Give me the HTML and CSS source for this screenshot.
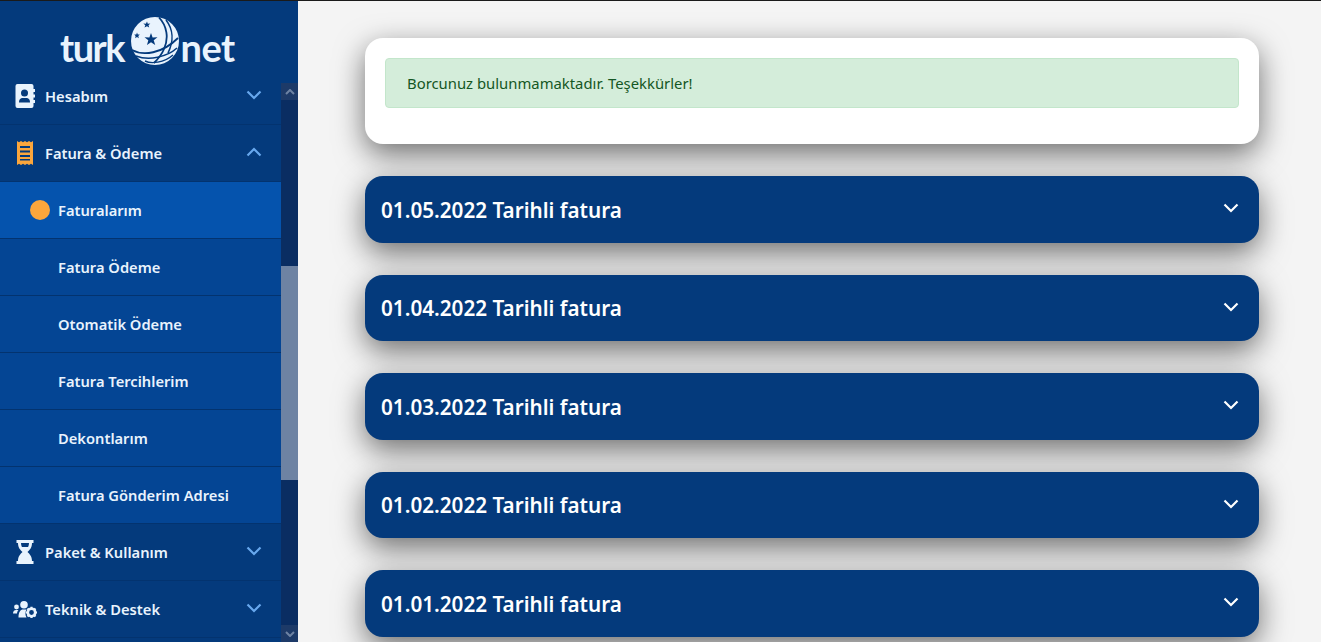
FILE: index.html
```html
<!DOCTYPE html>
<html lang="tr">
<head>
    <meta charset="UTF-8">
    <meta name="viewport" content="width=device-width, initial-scale=1.0">
    <title>Faturalarım</title>
    <link rel="stylesheet" href="styles.css">
</head>
<body>
    <div class="layout">
        <aside class="sidebar">
            <div class="logo">
                <span class="logo-text logo-turk">turk</span>
                <svg class="globe" viewBox="0 0 48 48" width="48" height="48">
                    <circle cx="24" cy="24" r="24" fill="#e9f3fd"/>
                    <polygon fill="#043a7c" points="20,16 21.6,20.6 26.5,20.3 22.7,23.3 24.2,28 20,25.3 16,28 17.3,23.3 13.5,20.3 18.4,20.6"/>
                    <polygon fill="#043a7c" points="16,4.500 16.800,6.800 19.300,6.400 17.500,8.200 18.200,10.500 16,9.200 13.500,10.500 14.300,8.200 12.300,6.500 14.900,6.800"/>
                    <polygon fill="#043a7c" points="6,15.500 6.800,17.500 8.800,17.500 7.300,19 7.800,21.200 6,20 4.200,21.200 4.600,19 3.200,17.500 5.300,17.500"/>
                    <path d="M28 0.500C36 9 38 21 33 32C31 37 27 42 23 46" fill="none" stroke="#043a7c" stroke-width="1.800"/>
                    <path d="M35 3C42 12 43 24 37 36" fill="none" stroke="#043a7c" stroke-width="1.600"/>
                    <path d="M1 33C12 39 31 37 47 21" fill="none" stroke="#043a7c" stroke-width="1.800"/>
                    <path d="M5 39C18 44 36 40 46 31" fill="none" stroke="#043a7c" stroke-width="1.600"/>
                    <path d="M14 44C20 47 33 46 42 38" fill="none" stroke="#043a7c" stroke-width="1.400"/>
                </svg>
                <span class="logo-text">net</span>
            </div>

            <nav class="menu">
                <a class="menu-item">
                    <svg class="menu-icon" viewBox="0 0 20 24" width="20" height="24">
                        <path fill="#e9f3fd" d="M2.500 0H16.500A2 2 0 0 1 18.500 2V5H20V8H18.500V10.500H20V13.500H18.500V16H20V19H18.500V22A2 2 0 0 1 16.500 24H2.500A2 2 0 0 1 0.500 22V2A2 2 0 0 1 2.500 0Z"/>
                        <circle cx="9.500" cy="9" r="3.500" fill="#043a7c"/>
                        <path fill="#043a7c" d="M4 18.500C4 15 6 14 7.500 14H11.500C13 14 15 15 15 18.500Z"/>
                    </svg>
                    <span class="menu-label">Hesabım</span>
                    <svg class="chev" viewBox="0 0 16 10" width="16" height="10"><path d="M1.500 1.500L8 8L14.500 1.500"/></svg>
                </a>
                <a class="menu-item open">
                    <svg class="menu-icon" viewBox="0 0 20 24" width="20" height="24">
                        <path fill="#fba63c" d="M2 0L4 1.200L6 0L8 1.200L10 0L12 1.200L14 0L16 1.200L18 0V24L16 22.800L14 24L12 22.800L10 24L8 22.800L6 24L4 22.800L2 24Z"/>
                        <path fill="#043a7c" d="M5 5H15V7H5ZM5 9.500H15V11.500H5ZM5 14H15V16H5ZM5 18H15V19.500H5Z"/>
                    </svg>
                    <span class="menu-label">Fatura &amp; Ödeme</span>
                    <svg class="chev" viewBox="0 0 16 10" width="16" height="10"><path d="M1.500 8.500L8 2L14.500 8.500"/></svg>
                </a>
                <a class="sub-item active"><span class="dot"></span>Faturalarım</a>
                <a class="sub-item">Fatura Ödeme</a>
                <a class="sub-item">Otomatik Ödeme</a>
                <a class="sub-item">Fatura Tercihlerim</a>
                <a class="sub-item">Dekontlarım</a>
                <a class="sub-item">Fatura Gönderim Adresi</a>
                <a class="menu-item">
                    <svg class="menu-icon" viewBox="0 0 20 24" width="20" height="24">
                        <path fill="#e9f3fd" d="M1.500 0H18.500V3H17C17 8 14.500 10 12.500 12C14.500 14 17 16 17 21H18.500V24H1.500V21H3C3 16 5.500 14 7.500 12C5.500 10 3 8 3 3H1.500ZM6 3C6 4.500 6.300 5.800 6.900 7H13.100C13.700 5.800 14 4.500 14 3Z"/>
                    </svg>
                    <span class="menu-label">Paket &amp; Kullanım</span>
                    <svg class="chev" viewBox="0 0 16 10" width="16" height="10"><path d="M1.500 1.500L8 8L14.500 1.500"/></svg>
                </a>
                <a class="menu-item">
                    <svg class="menu-icon" viewBox="0 0 24 17" width="24" height="17">
                        <circle cx="3.500" cy="6" r="2.400" fill="#e9f3fd"/>
                        <circle cx="11" cy="3.800" r="3.800" fill="#e9f3fd"/>
                        <path fill="#e9f3fd" d="M0 12.500C0 10 1.500 9 3 9H5.500C4.500 10 4 11.500 4 12.500ZM5.500 16.500C5.500 11 7.500 8.500 10 8.500H13.500C12 11 12 14 13.500 16.500Z"/>
                        <circle cx="18.500" cy="11.500" r="3.700" fill="none" stroke="#e9f3fd" stroke-width="2.600"/>
                        <path stroke="#e9f3fd" stroke-width="2.200" d="M18.500 5.800V8M18.500 15V17M12.800 11.500H15M22 11.500H24M14.500 7.500L16 9M21 14L22.500 15.500M14.500 15.500L16 14M21 9L22.500 7.500"/>
                    </svg>
                    <span class="menu-label">Teknik &amp; Destek</span>
                    <svg class="chev" viewBox="0 0 16 10" width="16" height="10"><path d="M1.500 1.500L8 8L14.500 1.500"/></svg>
                </a>
            </nav>

            <!-- kaydirma cubugu -->
            <div class="scrollbar">
                <div class="scroll-btn"><svg viewBox="0 0 10 6" width="10" height="6"><path d="M1 5L5 1L9 5"/></svg></div>
                <div class="scroll-track">
                    <div class="scroll-thumb"></div>
                </div>
                <div class="scroll-btn"><svg viewBox="0 0 10 6" width="10" height="6"><path d="M1 1L5 5L9 1"/></svg></div>
            </div>
        </aside>

        <main class="content">
            <div class="notice-card">
                <div class="alert">Borcunuz bulunmamaktadır. Teşekkürler!</div>
            </div>

            <div class="invoice">
                <span>01.05.2022 Tarihli fatura</span>
                <svg class="invoice-chev" viewBox="0 0 16 10" width="16" height="10"><path d="M1.500 1.500L8 8L14.500 1.500"/></svg>
            </div>
            <div class="invoice">
                <span>01.04.2022 Tarihli fatura</span>
                <svg class="invoice-chev" viewBox="0 0 16 10" width="16" height="10"><path d="M1.500 1.500L8 8L14.500 1.500"/></svg>
            </div>
            <div class="invoice">
                <span>01.03.2022 Tarihli fatura</span>
                <svg class="invoice-chev" viewBox="0 0 16 10" width="16" height="10"><path d="M1.500 1.500L8 8L14.500 1.500"/></svg>
            </div>
            <div class="invoice">
                <span>01.02.2022 Tarihli fatura</span>
                <svg class="invoice-chev" viewBox="0 0 16 10" width="16" height="10"><path d="M1.500 1.500L8 8L14.500 1.500"/></svg>
            </div>
            <div class="invoice">
                <span>01.01.2022 Tarihli fatura</span>
                <svg class="invoice-chev" viewBox="0 0 16 10" width="16" height="10"><path d="M1.500 1.500L8 8L14.500 1.500"/></svg>
            </div>
        </main>
    </div>
</body>
</html>
```

FILE: styles.css
```css
html, body {
    margin: 0;
    height: 100%;
    overflow: hidden;
}

body {
    font-family: "Noto Sans", "Open Sans", sans-serif;
    background: #f4f4f4;
    border-top: 1px solid #1a1a1a;
    box-sizing: border-box;
}

.layout {
    display: flex;
    height: 100%;
}

/* menu */
.sidebar {
    position: relative;
    flex: 0 0 298px;
    background: #043a7c;
    overflow: hidden;
}

.logo {
    display: flex;
    align-items: flex-end;
    height: 64px;
    padding-left: 60px;
    margin-bottom: 3px;
}

.logo-text {
    font-family: "Lato", sans-serif;
    font-size: 38px;
    font-weight: 700;
    letter-spacing: -0.500px;
    line-height: 47px;
    margin-bottom: -6px;
    color: #e9f3fd;
}

.logo-turk {
    letter-spacing: -1.500px;
}

.globe {
    margin: 0 1.500px 0 7px;
}

.menu {
    width: 281px;
}

.menu-item, .sub-item {
    display: flex;
    align-items: center;
    box-sizing: border-box;
    height: 57px;
    border-bottom: 1px solid #03336f;
    color: #e9f3fd;
    font-size: 14.700px;
    font-weight: 600;
}

.menu-item {
    padding: 0 19px 0 13px;
}

.menu-icon {
    flex: 0 0 24px;
    margin-right: 8px;
}

.menu-label {
    flex: 1;
}

.chev {
    margin-top: -3px;
}

.chev path, .invoice-chev path {
    fill: none;
    stroke-width: 2.200;
}

.chev path {
    stroke: #68a8ee;
}

.sub-item {
    padding-left: 58px;
    background: #044594;
}

.sub-item.active {
    position: relative;
    background: #0553ad;
}

.dot {
    position: absolute;
    left: 30px;
    width: 20px;
    height: 20px;
    border-radius: 50%;
    background: #fba63c;
}

.scrollbar {
    position: absolute;
    top: 82px;
    right: 0;
    bottom: 0;
    width: 17px;
    display: flex;
    flex-direction: column;
    background: #0a2d62;
}

.scroll-btn {
    display: flex;
    align-items: center;
    justify-content: center;
    height: 17px;
    background: #1d3a68;
}

.scroll-btn path {
    fill: none;
    stroke: #6e83a3;
    stroke-width: 2;
}

.scroll-track {
    flex: 1;
    padding-top: 166px;
}

.scroll-thumb {
    height: 214px;
    background: #6e83a3;
}

/* icerik */
.content {
    flex: 1;
    padding: 37px 62px 0 67px;
    min-width: 0;
}

.notice-card {
    box-sizing: border-box;
    height: 106px;
    padding: 20px;
    margin-bottom: 32px;
    background: #fff;
    border-radius: 18px;
    box-shadow: 0 10px 30px rgba(0, 0, 0, 0.55);
}

.alert {
    box-sizing: border-box;
    height: 50px;
    padding: 0 21px;
    display: flex;
    align-items: center;
    background: #d4edda;
    border: 1px solid #c3e6cb;
    border-radius: 4px;
    color: #155724;
    font-size: 14.850px;
}

.invoice {
    display: flex;
    align-items: center;
    justify-content: space-between;
    box-sizing: border-box;
    height: 66.500px;
    padding: 1px 20px 0 16px;
    margin-bottom: 32px;
    background: #043a7c;
    border-radius: 18px;
    box-shadow: 0 10px 30px rgba(0, 0, 0, 0.55);
    color: #fff;
    font-size: 20.700px;
    font-weight: 600;
}

.invoice-chev {
    margin-top: -3px;
}

.invoice-chev path {
    stroke: #fff;
}
```
